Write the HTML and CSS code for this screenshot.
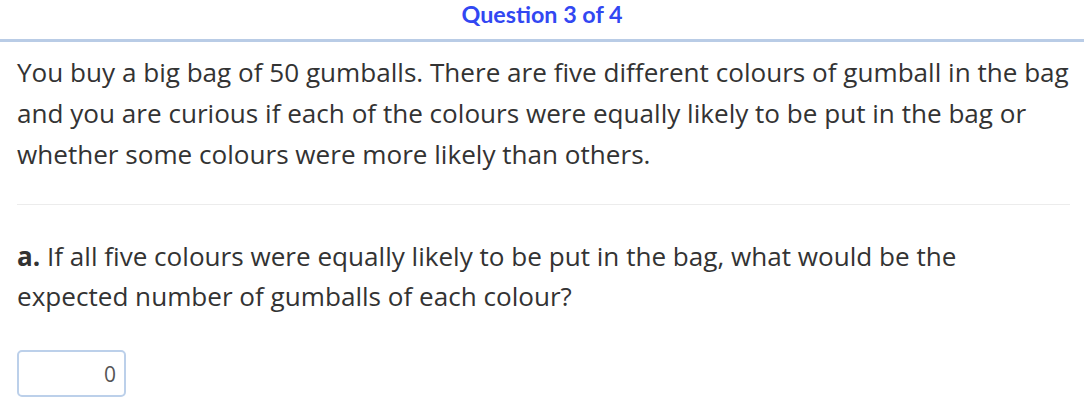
FILE: index.html
```html
<!DOCTYPE html>
<html>
<head>
<meta charset="utf-8">
<link rel="stylesheet" href="styles.css">
</head>
<body>
<header class="topbar">
  <h1 class="title">Question 3 of 4</h1>
</header>
<main class="content">
  <p class="intro">You buy a big bag of 50 gumballs. There are five different colours of gumball in the bag and you are curious if each of the colours were equally likely to be put in the bag or whether some colours were more likely than others.</p>
  <hr class="divider">
  <p class="part"><b>a.</b> If all five colours were equally likely to be put in the bag, what would be the expected number of gumballs of each colour?</p>
  <input class="answer" type="text" value="0">
</main>
</body>
</html>
```

FILE: styles.css
```css
html, body {
  margin: 0;
  padding: 0;
  background: #fff;
}
.topbar {
  border-bottom: 3px solid #b9cce6;
  height: 39px;
  display: flex;
  justify-content: center;
}
.title {
  margin: 0;
  font-family: Lato, sans-serif;
  font-weight: 700;
  font-size: 23.3px;
  line-height: 28px;
  color: #3247f2;
  letter-spacing: 0;
}
.content {
  padding: 0 14px 0 17px;
  font-family: "Open Sans", sans-serif;
  color: #333;
  font-size: 26.1px;
}
.intro {
  margin: 10px 0 0;
  line-height: 41px;
}
.divider {
  border: 0;
  border-top: 1px solid #ececec;
  margin: 29px 0 0;
}
.part {
  margin: 31px 0 0;
  line-height: 40px;
}
.part b {
  font-weight: 700;
}
.answer {
  display: block;
  margin-top: 34px;
  width: 109px;
  height: 47px;
  box-sizing: border-box;
  border: 2px solid #bcd0ea;
  border-radius: 5px;
  font-family: "Open Sans", sans-serif;
  font-size: 21px;
  color: #555;
  text-align: right;
  padding: 0 8px;
}
```
